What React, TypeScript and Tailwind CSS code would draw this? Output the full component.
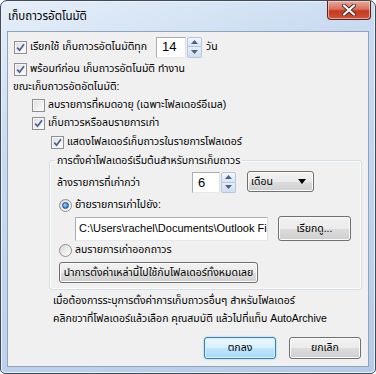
import React from "react";

const FONT = "font-['Liberation_Sans','Noto_Sans_Thai','Tahoma','DejaVu_Sans',sans-serif]";

function Check({ checked }: { checked?: boolean }) {
  return (
    <span className="w-[13px] h-[13px] shrink-0 border border-[#8e8f8f] bg-[linear-gradient(135deg,#dcdcdc,#ffffff)] shadow-[inset_0_0_0_1px_#f6f6f6] flex items-center justify-center">
      {checked && (
        <svg width="9" height="9" viewBox="0 0 9 9">
          <path d="M1.2 4.6 L3.6 7.2 L8 1.2" stroke="#4a5f97" strokeWidth="1.7" fill="none" />
        </svg>
      )}
    </span>
  );
}

function Radio({ checked }: { checked?: boolean }) {
  return (
    <span className="w-[13px] h-[13px] shrink-0 rounded-full border border-[#8e8f8f] bg-[linear-gradient(135deg,#d8d8d8,#ffffff)] flex items-center justify-center">
      {checked && (
        <span className="w-[7px] h-[7px] rounded-full border border-[#1c4f8c] bg-[radial-gradient(circle_at_40%_40%,#a6dcff,#2a7fd0_70%)]" />
      )}
    </span>
  );
}

function Spin({ value, w }: { value: string; w: number }) {
  return (
    <div className="flex h-[21px]">
      <div
        className="h-full bg-white border border-[#abadb3] border-r-[#dbdfe6] border-b-[#e3e9ef] flex items-center pl-[5px] text-[13px]"
        style={{ width: w }}
      >
        {value}
      </div>
      <div className="w-[15px] h-full flex flex-col ml-[1px]">
        <div className="h-1/2 border border-[#b7c6da] rounded-t-[2px] bg-[linear-gradient(#f3f8fd,#d6e5f6)] flex items-center justify-center">
          <svg width="7" height="4" viewBox="0 0 7 4"><path d="M0 4 L3.5 0 L7 4Z" fill="#4d6185" /></svg>
        </div>
        <div className="h-1/2 border border-t-0 border-[#b7c6da] rounded-b-[2px] bg-[linear-gradient(#e4eefa,#cddff3)] flex items-center justify-center">
          <svg width="7" height="4" viewBox="0 0 7 4"><path d="M0 0 L3.5 4 L7 0Z" fill="#4d6185" /></svg>
        </div>
      </div>
    </div>
  );
}

const BTN =
  "border border-[#707070] rounded-[3px] bg-[linear-gradient(#f2f2f2_0%,#ebebeb_50%,#dddddd_51%,#cfcfcf_100%)] shadow-[inset_0_0_0_1px_#fbfbfb] flex items-center justify-center text-black whitespace-nowrap";

export default function App() {
  return (
    <div className={`w-[376px] h-[374px] ${FONT} text-[10.5px] text-black`}>
      <div className="w-full h-full flex flex-col border border-[#414a55] rounded-t-[7px] rounded-b-[5px] bg-[linear-gradient(160deg,#e6eff9_0%,#c9dbf1_30%,#b4cce9_100%)] shadow-[inset_0_0_0_1px_#e9f1fa]">
        <div className="h-[30px] flex shrink-0">
          <div className="pl-[7px] pt-[6px] text-[11.5px] leading-[18px] text-black">เก็บถาวรอัตโนมัติ</div>
          <div className="ml-auto mr-[4px] w-[44px] h-[19px] rounded-b-[4px] border border-t-0 border-[#5b2318] bg-[linear-gradient(#e9a99c_0%,#d8715e_45%,#c3391f_55%,#d2523a_100%)] shadow-[inset_0_0_0_1px_rgba(255,220,210,0.6)] flex items-center justify-center">
            <svg width="14" height="12" viewBox="0 0 14 12">
              <path d="M2 1.5 L12 10.5 M12 1.5 L2 10.5" stroke="#4a2a24" strokeWidth="4" strokeLinecap="round" />
              <path d="M2 1.5 L12 10.5 M12 1.5 L2 10.5" stroke="#ffffff" strokeWidth="2.2" strokeLinecap="round" />
            </svg>
          </div>
        </div>
        <div className="flex-1 mx-[6px] mb-[6px] border border-[#8fa3bd] bg-[#f0f0f0] flex flex-col pl-[6px] pt-[5px] pr-[6px]">
          {/* Row 1 */}
          <div className="h-[20px] flex items-center">
            <Check checked />
            <span className="ml-[3px] w-[126px] shrink-0 whitespace-nowrap">เรียกใช้ เก็บถาวรอัตโนมัติทุก</span>
            <div>
              <Spin value="14" w={30} />
            </div>
            <span className="ml-[4px]">วัน</span>
          </div>
          <div className="h-[18px] mt-[3px] flex items-center">
            <Check checked />
            <span className="ml-[3px]">พร้อมท์ก่อน เก็บถาวรอัตโนมัติ ทำงาน</span>
          </div>
          <div className="h-[18px] flex items-center -ml-[1px]">ขณะเก็บถาวรอัตอัตโนมัติ:</div>
          <div className="h-[18px] flex items-center pl-[18px]">
            <Check />
            <span className="ml-[3px]">ลบรายการที่หมดอายุ (เฉพาะโฟลเดอร์อีเมล)</span>
          </div>
          <div className="h-[18px] flex items-center pl-[18px]">
            <Check checked />
            <span className="ml-[3px]">เก็บถาวรหรือลบรายการเก่า</span>
          </div>
          <div className="h-[18px] mt-[1px] flex items-center pl-[37px]">
            <Check checked />
            <span className="ml-[3px]">แสดงโฟลเดอร์เก็บถาวรในรายการโฟลเดอร์</span>
          </div>
          {/* Group */}
          <fieldset className="ml-[35px] mt-[1px] border border-[#d5dfe5] rounded-[3px] shadow-[inset_0_0_0_1px_#fbfbfb] pl-[7px] pr-[9px] pb-[6px]">
            <legend className="-ml-[2px] px-[2px] h-[16px] leading-[16px]">การตั้งค่าโฟลเดอร์เริ่มต้นสำหรับการเก็บถาวร</legend>
            <div className="mt-[4px] h-[21px] flex items-center">
              <span className="w-[135px] shrink-0">ล้างรายการที่เก่ากว่า</span>
              <Spin value="6" w={28} />
              <div className="ml-[11px] w-[67px] h-[21px] border border-[#707070] rounded-[3px] bg-[linear-gradient(#f2f2f2_0%,#ebebeb_50%,#dddddd_51%,#cfcfcf_100%)] shadow-[inset_0_0_0_1px_#fbfbfb] flex items-center pl-[3px] pr-[7px] -mt-[2px]">
                <span>เดือน</span>
                <svg className="ml-auto" width="8" height="5" viewBox="0 0 8 5"><path d="M0 0 L8 0 L4 5Z" fill="#000" /></svg>
              </div>
            </div>
            <div className="mt-[3px] h-[18px] flex items-center pl-[2px]">
              <Radio checked />
              <span className="ml-[3px]">ย้ายรายการเก่าไปยัง:</span>
            </div>
            <div className="mt-[2px] h-[25px] flex items-center pl-[18px]">
              <div className="w-[193px] h-[24px] bg-white border border-[#abadb3] border-r-[#dbdfe6] border-b-[#e3e9ef] flex items-center pl-[3px] overflow-hidden whitespace-nowrap text-[11px]">
                C:\Users\rachel\Documents\Outlook Fi
              </div>
              <div className={`${BTN} ml-[10px] w-[73px] h-[25px]`}>เรียกดู...</div>
            </div>
            <div className="mt-[1px] h-[16px] flex items-center pl-[2px]">
              <Radio />
              <span className="ml-[3px]">ลบรายการเก่าออกถาวร</span>
            </div>
            <div className={`${BTN} mt-[4px] ml-[2px] w-[199px] h-[21px]`}>นำการตั้งค่าเหล่านี้ไปใช้กับโฟลเดอร์ทั้งหมดเลย</div>
          </fieldset>
          <div className="mt-[1px] pl-[39px] leading-[18px] whitespace-nowrap">
            <div>เมื่อต้องการระบุการตั้งค่าการเก็บถาวรอื่นๆ สำหรับโฟลเดอร์</div>
            <div>คลิกขวาที่โฟลเดอร์แล้วเลือก คุณสมบัติ แล้วไปที่แท็บ AutoArchive</div>
          </div>
          <div className="mt-[10px] flex justify-end gap-[13px] pr-[1px]">
            <div className="w-[72px] h-[22px] border border-[#3c7fb1] rounded-[3px] bg-[linear-gradient(#eaf6fd_0%,#d9f0fc_50%,#bee6fd_51%,#a7d9f5_100%)] shadow-[inset_0_0_0_1px_#d6f0fc,0_0_2px_#6fc3f0] flex items-center justify-center">ตกลง</div>
            <div className={`${BTN} w-[72px] h-[22px]`}>ยกเลิก</div>
          </div>
        </div>
      </div>
    </div>
  );
}
